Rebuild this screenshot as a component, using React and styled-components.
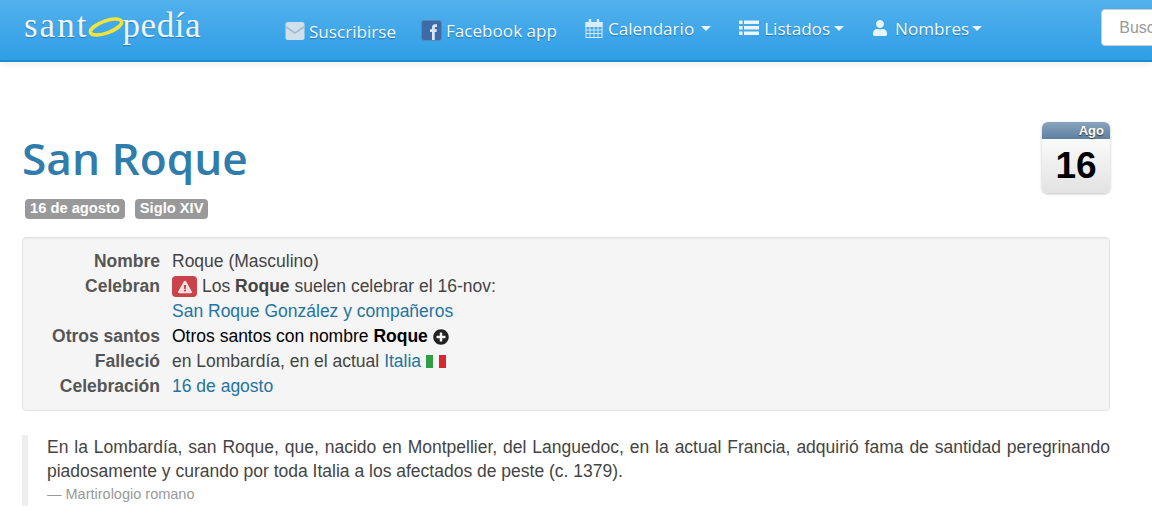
import React from 'react'
import styled, { createGlobalStyle } from 'styled-components'
import { FaUser, FaPlusCircle, FaExclamationTriangle } from 'react-icons/fa'

const GlobalStyle = createGlobalStyle`
  html, body {
    margin: 0;
    padding: 0;
    background: #fff;
    overflow: hidden;
    font-family: "Liberation Sans", Arial, sans-serif;
    color: #444;
  }
`

const Navbar = styled.div`
  height: 62px;
  box-sizing: border-box;
  display: flex;
  align-items: flex-start;
  padding-left: 24px;
  background: linear-gradient(to bottom, #52b0ec, #2f9fe6);
  border-bottom: 2px solid #1f8ccf;
  box-shadow: 0 2px 8px rgba(0, 0, 0, 0.08);
  overflow: hidden;
`

const Logo = styled.div`
  width: 177px;
  height: 48px;
  margin-top: 6px;
  flex: none;
  display: flex;
  align-items: flex-start;
  font-family: "Liberation Serif", serif;
  font-size: 35px;
  line-height: 40px;
  color: #eef6fb;
  text-shadow: 0 1px 1px rgba(0, 50, 90, 0.35);
`

const LogoPart = styled.span`
  letter-spacing: ${(p) => p.$spacing}px;
`

const Halo = styled.svg`
  width: 38px;
  height: 22px;
  margin: 10px -3px 0 -1px;
  flex: none;
`

const NavList = styled.div`
  display: flex;
  margin-left: 84px;
  flex: none;
`

const NavItem = styled.div`
  display: flex;
  align-items: center;
  height: 24px;
  margin-top: ${(p) => p.$top}px;
  margin-right: ${(p) => p.$gap}px;
  gap: ${(p) => p.$iconGap || 4}px;
  font-family: "Open Sans", sans-serif;
  font-size: 17.1px;
  color: #f2f9fd;
  text-shadow: 0 1px 1px rgba(0, 50, 90, 0.4);
  white-space: nowrap;
  svg {
    flex: none;
  }
`

const Caret = styled.span`
  width: 0;
  height: 0;
  margin-left: ${(p) => p.$left || 3}px;
  border-top: 5px solid #eaf5fc;
  border-left: 5px solid transparent;
  border-right: 5px solid transparent;
`

const SearchBox = styled.div`
  width: 120px;
  height: 37px;
  margin-top: 9px;
  margin-left: 119px;
  flex: none;
  box-sizing: border-box;
  padding: 8px 17px;
  background: #fff;
  border: 1px solid #ccc;
  border-radius: 4px;
  font-size: 16px;
  line-height: 19px;
  color: #999;
  overflow: hidden;
`

const Main = styled.main`
  padding: 60px 42px 0 22px;
`

const Header = styled.header`
  display: flex;
  justify-content: space-between;
  align-items: flex-start;
`

const Title = styled.h1`
  margin: 8px 0 0;
  font-family: "Open Sans", sans-serif;
  font-size: 44.2px;
  line-height: 56px;
  font-weight: 600;
  color: #307cab;
`

const Badges = styled.div`
  display: flex;
  gap: 10px;
  margin: 13px 0 0 3px;
`

const Badge = styled.span`
  height: 20px;
  padding: 0 5px;
  background: #999;
  border-radius: 4px;
  font-size: 14.7px;
  line-height: 19px;
  font-weight: bold;
  color: #fff;
`

const CalendarCard = styled.div`
  width: 68px;
  height: 71px;
  border-radius: 6px;
  overflow: hidden;
  background: linear-gradient(to bottom, #fff 10%, #e2e2e2);
  box-shadow: 0 1px 3px rgba(0, 0, 0, 0.25);
  text-align: center;
`

const CalendarMonth = styled.div`
  height: 17px;
  padding-right: 6px;
  background: linear-gradient(to bottom, #8aa4bf, #5d7f9f);
  font-size: 13px;
  line-height: 17px;
  font-weight: bold;
  text-align: right;
  color: #fff;
  text-shadow: 0 1px 1px #333;
`

const CalendarDay = styled.div`
  font-size: 37px;
  line-height: 54px;
  font-weight: bold;
  color: #000;
`

const Panel = styled.section`
  margin-top: 18px;
  box-sizing: border-box;
  height: 174px;
  padding: 11px 0;
  background: #f5f5f5;
  border: 1px solid #e3e3e3;
  border-radius: 4px;
  box-shadow: inset 0 1px 1px rgba(0, 0, 0, 0.05);
`

const Details = styled.dl`
  margin: 0;
  display: grid;
  grid-template-columns: 137px 1fr;
  column-gap: 12px;
  font-size: 17.5px;
  line-height: 25px;
`

const Term = styled.dt`
  grid-column: 1;
  text-align: right;
  font-weight: bold;
  color: #555;
`

const Value = styled.dd`
  grid-column: 2;
  margin: 0;
  display: flex;
  align-items: center;
  color: ${(p) => p.$color || '#444'};
  b {
    margin: 0 4.9px;
    color: inherit;
  }
`

const Link = styled.a`
  color: #23749f;
  margin: ${(p) => p.$margin || 0};
`

const WarningLabel = styled.span`
  display: flex;
  align-items: center;
  justify-content: center;
  width: 25px;
  height: 21px;
  margin-right: 5px;
  background: #c9434a;
  border-radius: 4px;
  color: #f9dfe0;
  font-size: 14px;
`

const PlusIcon = styled(FaPlusCircle)`
  width: 16px;
  height: 16px;
  color: #222;
`

const Flag = styled.svg`
  width: 20px;
  height: 13px;
  margin-left: 5px;
`

const Quote = styled.blockquote`
  margin: 25px 0 0;
  height: 71px;
  box-sizing: border-box;
  padding: 0 0 0 19px;
  border-left: 6px solid #eee;
  font-size: 17.5px;
  line-height: 24px;
  color: #444;
  text-align: justify;
  p {
    margin: -1px 0 0;
  }
`

const Source = styled.footer`
  font-size: 14.5px;
  line-height: 23px;
  color: #999;
`

function MailIcon() {
  return (
    <svg width="20" height="20" viewBox="0 0 20 20">
      <rect x="0.5" y="1" width="19" height="18" rx="2.5" fill="#cfe0ec" />
      <path d="M1 6 L10 12 L19 6" fill="none" stroke="#a4bccd" strokeWidth="1.6" />
    </svg>
  )
}

function FacebookIcon() {
  return (
    <svg width="21" height="21" viewBox="0 0 21 21">
      <rect x="0.5" y="0.5" width="20" height="20" rx="2.5" fill="#3f6aa8" stroke="#5d86b8" />
      <path d="M11 20 V12 H9 V9.3 H11 V7.4 C11 5.2 12.3 4.3 14 4.3 H16 V7 H14.8 C14 7 13.8 7.4 13.8 8 V9.3 H16 L15.6 12 H13.8 V20 Z" fill="#d8e6f2" />
    </svg>
  )
}

function CalendarIcon() {
  return (
    <svg width="18" height="19" viewBox="0 0 18 19" fill="none" stroke="#d9ecfa">
      <rect x="1" y="3.5" width="16" height="15" />
      <path d="M1 7.5 H17 M1 11 H17 M1 14.5 H17 M5 7.5 V18 M9 7.5 V18 M13 7.5 V18" strokeWidth="0.9" />
      <path d="M5 0.5 V5 M13 0.5 V5" strokeWidth="2.4" strokeLinecap="round" />
      <rect x="1" y="3.5" width="16" height="4" fill="#d9ecfa" />
    </svg>
  )
}

function ListIcon() {
  return (
    <svg width="20" height="16" viewBox="0 0 20 16" fill="#eaf5fc">
      <rect x="0" y="0.5" width="3.5" height="3.5" />
      <rect x="0" y="6" width="3.5" height="3.5" />
      <rect x="0" y="11.5" width="3.5" height="3.5" />
      <rect x="5" y="0.5" width="15" height="3.5" />
      <rect x="5" y="6" width="15" height="3.5" />
      <rect x="5" y="11.5" width="15" height="3.5" />
    </svg>
  )
}

function App() {
  return (
    <>
      <GlobalStyle />
      <Navbar>
        <Logo>
          <LogoPart $spacing={2}>sant</LogoPart>
          <Halo viewBox="0 0 38 22">
            <ellipse cx="19" cy="11" rx="16.5" ry="6" transform="rotate(-20 19 11)" fill="none" stroke="#f3e43a" strokeWidth="3.6" />
          </Halo>
          <LogoPart $spacing={0.6}>pedía</LogoPart>
        </Logo>
        <NavList>
          <NavItem $top={19} $gap={25}>
            <MailIcon />
            Suscribirse
          </NavItem>
          <NavItem $top={18} $gap={28}>
            <FacebookIcon />
            Facebook app
          </NavItem>
          <NavItem $top={16} $gap={28} $iconGap={5}>
            <CalendarIcon />
            Calendario
            <Caret $left={2} />
          </NavItem>
          <NavItem $top={16} $gap={28} $iconGap={5}>
            <ListIcon />
            Listados
            <Caret $left={-1} />
          </NavItem>
          <NavItem $top={16} $gap={0} $iconGap={7}>
            <FaUser size={16} color="#e8f4fc" />
            Nombres
            <Caret $left={-4} />
          </NavItem>
        </NavList>
        <SearchBox>Buscar</SearchBox>
      </Navbar>
      <Main>
        <Header>
          <div>
            <Title>San Roque</Title>
            <Badges>
              <Badge>16 de agosto</Badge>
              <Badge>Siglo XIV</Badge>
            </Badges>
          </div>
          <CalendarCard>
            <CalendarMonth>Ago</CalendarMonth>
            <CalendarDay>16</CalendarDay>
          </CalendarCard>
        </Header>
        <Panel>
          <Details>
            <Term>Nombre</Term>
            <Value>Roque (Masculino)</Value>
            <Term>Celebran</Term>
            <Value>
              <WarningLabel>
                <FaExclamationTriangle />
              </WarningLabel>
              Los<b>Roque</b>suelen celebrar el 16-nov:
            </Value>
            <Value>
              <Link>San Roque González y compañeros</Link>
            </Value>
            <Term>Otros santos</Term>
            <Value $color="#000">
              Otros santos con nombre<b>Roque</b>
              <PlusIcon />
            </Value>
            <Term>Falleció</Term>
            <Value>
              en Lombardía, en el actual
              <Link $margin="0 0 0 4.9px">Italia</Link>
              <Flag viewBox="0 0 20 13">
                <rect width="7" height="13" fill="#2f9e44" />
                <rect x="7" width="6" height="13" fill="#f4f4f4" />
                <rect x="13" width="7" height="13" fill="#d8262f" />
              </Flag>
            </Value>
            <Term>Celebración</Term>
            <Value>
              <Link>16 de agosto</Link>
            </Value>
          </Details>
        </Panel>
        <Quote>
          <p>
            En la Lombardía, san Roque, que, nacido en Montpellier, del Languedoc, en la actual Francia, adquirió fama de santidad peregrinando piadosamente y curando por toda Italia a los afectados de peste (c. 1379).
          </p>
          <Source>— Martirologio romano</Source>
        </Quote>
      </Main>
    </>
  )
}

export default App
